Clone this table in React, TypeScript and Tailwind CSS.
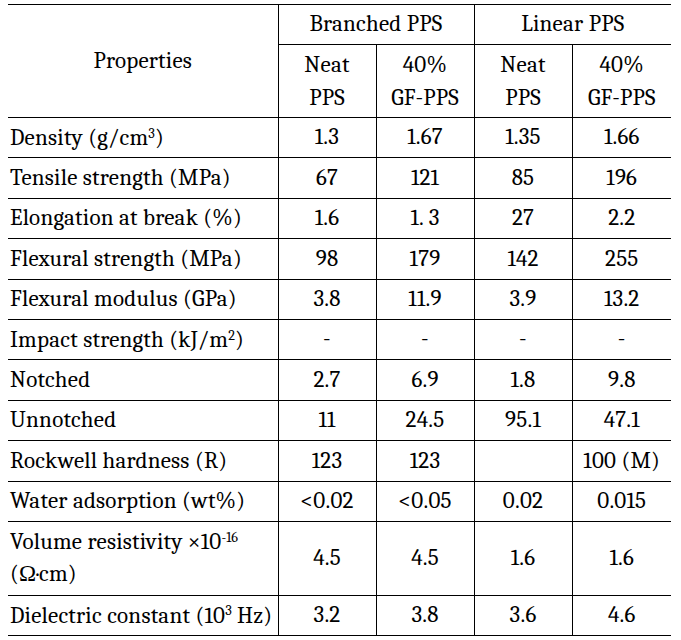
const Sup = ({ children }: { children: React.ReactNode }) => (
  <sup className="text-[0.62em] tracking-normal">{children}</sup>
);

const rows: { label: React.ReactNode; vals: string[]; tall?: boolean }[] = [
  { label: <>Density (g/cm<Sup>3</Sup>)</>, vals: ["1.3", "1.67", "1.35", "1.66"] },
  { label: "Tensile strength (MPa)", vals: ["67", "121", "85", "196"] },
  { label: "Elongation at break (%)", vals: ["1.6", "1. 3", "27", "2.2"] },
  { label: "Flexural strength (MPa)", vals: ["98", "179", "142", "255"] },
  { label: "Flexural modulus (GPa)", vals: ["3.8", "11.9", "3.9", "13.2"] },
  { label: <>Impact strength (kJ/m<Sup>2</Sup>)</>, vals: ["-", "-", "-", "-"] },
  { label: "Notched", vals: ["2.7", "6.9", "1.8", "9.8"] },
  { label: "Unnotched", vals: ["11", "24.5", "95.1", "47.1"] },
  { label: "Rockwell hardness (R)", vals: ["123", "123", "", "100 (M)"] },
  { label: "Water adsorption (wt%)", vals: ["<0.02", "<0.05", "0.02", "0.015"] },
  {
    label: (
      <>
        Volume resistivity ×10<Sup>-16</Sup>
        <br />
        (Ω·cm)
      </>
    ),
    vals: ["4.5", "4.5", "1.6", "1.6"],
    tall: true,
  },
  { label: <>Dielectric constant (10<Sup>3</Sup> Hz)</>, vals: ["3.2", "3.8", "3.6", "4.6"] },
];

export default function App() {
  return (
    <div className="min-h-[640px] w-[681px] bg-white pt-1 pl-2 text-black font-serif">
      <table className="w-[663px] table-fixed border-collapse font-serif text-[23px] tracking-[0.01em] text-black">
        <colgroup>
          <col className="w-[270px]" />
          <col className="w-[98px]" />
          <col className="w-[98px]" />
          <col className="w-[98px]" />
          <col className="w-[99px]" />
        </colgroup>
        <thead>
          <tr className="h-[40px]">
            <th rowSpan={2} className="border-t border-b border-black font-normal text-center align-middle">
              Properties
            </th>
            <th colSpan={2} className="border-t border-b border-l border-black font-normal text-center">
              Branched PPS
            </th>
            <th colSpan={2} className="border-t border-b border-l border-black font-normal text-center">
              Linear PPS
            </th>
          </tr>
          <tr className="h-[73px]">
            {["Neat", "40%", "Neat", "40%"].map((top, i) => (
              <th key={i} className="border-b border-l border-black font-normal text-center leading-[33px]">
                {top}
                <br />
                {i % 2 === 0 ? "PPS" : "GF-PPS"}
              </th>
            ))}
          </tr>
        </thead>
        <tbody>
          {rows.map((r, i) => (
            <tr key={i} className={r.tall ? "h-[74px]" : "h-[40.4px]"}>
              <td className="border-b border-black pl-[2px] text-left leading-[32px] whitespace-nowrap">{r.label}</td>
              {r.vals.map((v, j) => (
                <td key={j} className="border-b border-l border-black text-center">
                  {v}
                </td>
              ))}
            </tr>
          ))}
        </tbody>
      </table>
    </div>
  );
}
